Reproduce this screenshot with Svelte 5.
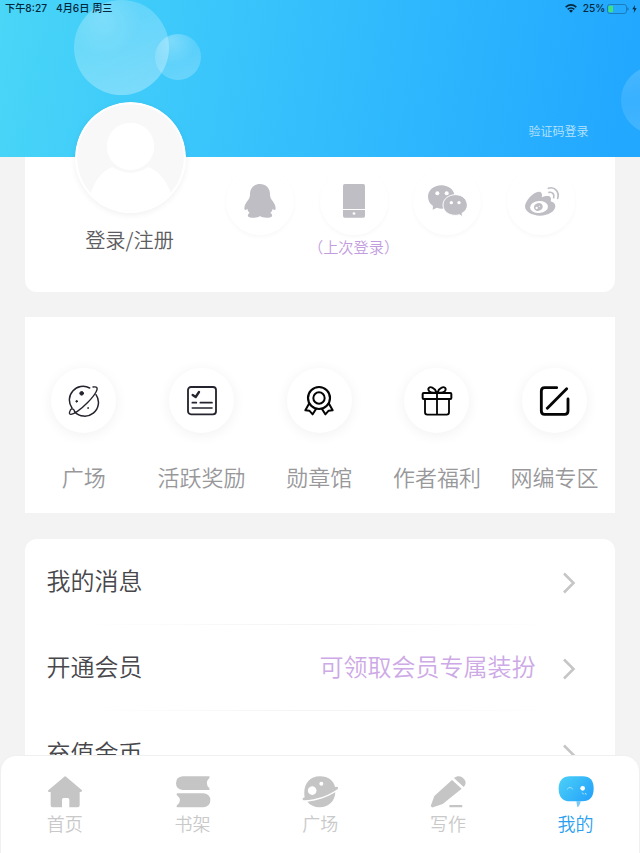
<script>
  /**
   * Profile ("我的") tab of the reading app, signed-out state.
   * Every icon is drawn on a 3x grid: 3 viewBox units per CSS pixel.
   */
  const logins = [
    { id: 'qq', label: 'QQ' },
    { id: 'phone', label: '手机', last: true },
    { id: 'wechat', label: '微信' },
    { id: 'weibo', label: '微博' },
  ];

  const shortcuts = [
    { id: 'planet', label: '广场' },
    { id: 'task', label: '活跃奖励' },
    { id: 'medal', label: '勋章馆' },
    { id: 'gift', label: '作者福利' },
    { id: 'edit', label: '网编专区' },
  ];

  const rows = [
    { label: '我的消息' },
    { label: '开通会员', hint: '可领取会员专属装扮' },
    { label: '充值金币' },
  ];

  const tabs = [
    { id: 'home', label: '首页' },
    { id: 'shelf', label: '书架' },
    { id: 'square', label: '广场' },
    { id: 'write', label: '写作' },
    { id: 'me', label: '我的' },
  ];

  let active = $state('me');
</script>

{#snippet loginIcon(id)}
  <svg class="login-icon" viewBox="0 0 120 108" fill="#bfbec4">
    {#if id === 'qq'}
      <path d="M60 3C43 3 30 15 30 33C30 39 29 43 26 49C19 58 13 67 13 76C13 82 17 83 22 77C23 83 26 87 29 90C22 93 21 103 31 103.500C41 105 55 104 60 99C65 104 79 105 89 103.500C99 103 98 93 91 90C94 87 97 83 98 77C103 83 107 82 107 76C107 67 101 58 94 49C91 43 90 39 90 33C90 15 77 3 60 3Z" />
    {:else if id === 'phone'}
      <path d="M32 3h56q5 0 5 5v70H27V8q0-5 5-5z" />
      <path d="M27 81h66v18q0 5-5 5H32q-5 0-5-5z" />
      <circle cx="60" cy="91.500" r="4" fill="#fff" />
    {:else if id === 'wechat'}
      <path d="M43 7C20 7 3 22 3 41C3 53 9 63 18 69L17 80L30 74Q37 77 43 77C66 77 83 62 83 42C83 22 66 7 43 7Z" />
      <path d="M86 35C65 35 48 48 48 66C48 84 64 97 85 97Q91 97 97 95L107 102L105 91C115 85 121 77 121 67C121 49 106 35 86 35Z" stroke="#fff" stroke-width="3" />
      <g fill="#fff">
        <circle cx="31" cy="31" r="6" /><circle cx="59" cy="31" r="6" />
        <circle cx="73" cy="59" r="5" /><circle cx="96" cy="59" r="5" />
      </g>
    {:else}
      <path d="M12 70C12 54 37 26 54 26C62 26 65 34 62 43C73 38 84 37 88 42C91 46 90 50 89 55C100 59 103 63 103 70C103 85 82 98 57 98C32 98 12 86 12 70Z" />
      <ellipse cx="54" cy="72" rx="27" ry="18" fill="#fff" transform="rotate(-5 54 72)" />
      <ellipse cx="52" cy="72" rx="13.500" ry="11.500" transform="rotate(-20 52 72)" />
      <circle cx="47" cy="75" r="3.500" fill="#fff" /><circle cx="55" cy="70" r="1.800" fill="#fff" />
      <path d="M82 16C101 9 116 27 110 46M84 28C95 26 101 35 98 44" fill="none" stroke="#bfbec4" stroke-width="5" stroke-linecap="round" />
    {/if}
  </svg>
{/snippet}

{#snippet shortcutIcon(id)}
  <svg
    class="shortcut-icon"
    viewBox="0 0 96 96"
    fill="none"
    stroke={id === 'planet' || id === 'task' ? '#24242e' : '#050505'}
    stroke-width="4.500"
    stroke-linecap="round"
    stroke-linejoin="round"
  >
    {#if id === 'planet'}
      <path d="M65 9A41 41 0 0 0 12 69M20 80A41 41 0 0 0 84 29" />
      <path d="M75 6C87 4 91 8 84 21C75 38 47 67 27 80C10 91 0 91 6 78Q7 74 10 72Q17 70 20 80" stroke-width="4" />
      <circle cx="41" cy="25" r="5.500" fill="#24242e" stroke-width="3" />
      <circle cx="26" cy="49" r="2.500" fill="#24242e" stroke-width="3" />
      <circle cx="60" cy="69" r="1.500" fill="#24242e" stroke-width="2" />
    {:else if id === 'task'}
      <rect x="6" y="6" width="84" height="82" rx="9" stroke-width="5.500" />
      <path d="M20 30L29 36L39 21" stroke-width="7" />
      <path d="M19 53H31M43 53H78M19 69H78" stroke-width="5" />
    {:else if id === 'medal'}
      <circle cx="48" cy="39" r="33" stroke-width="6.500" />
      <circle cx="48" cy="39" r="17" stroke-width="6" />
      <path d="M18 56L7 76L19 77L29 88L39 72M78 56L89 76L77 77L67 88L57 72" stroke-width="6" />
    {:else if id === 'gift'}
      <rect x="5" y="24" width="86" height="18" rx="3" stroke-width="6" />
      <path d="M12 43V82Q12 89 19 89H77Q84 89 84 82V43M48 24V88" stroke-width="5.500" />
      <path d="M47 23C39 23 28 24 24 18C18 9 27 4 34 8C41 11 45 17 47 23ZM49 23C57 23 68 24 72 18C78 9 69 4 62 8C55 11 51 17 49 23Z" stroke-width="5.500" />
    {:else}
      <path d="M53 8H17Q7 8 7 18V78Q7 88 17 88H77Q87 88 87 78V42" stroke-width="8.500" />
      <path d="M25 70L83 11" stroke-width="8.500" />
    {/if}
  </svg>
{/snippet}

{#snippet tabIcon(id)}
  <svg class="tab-icon" viewBox="0 0 108 102" fill="#c5c5c5">
    {#if id === 'home'}
      <path d="M51 6Q54 2 58 6L105 46Q107 50 101 51H98V91Q98 97 92 97H67V74Q67 69 62 69H50Q45 69 45 74V97H17Q11 97 11 91V51H7Q0 50 4 46Z" />
    {:else if id === 'shelf'}
      <path d="M23 4H102Q106 5 103 9Q88 24 103 40Q106 44 102 45H23Q3 43 3 25Q3 6 23 4Z" />
      <path d="M7 55H86Q106 58 106 76Q106 94 86 97H7Q2 96 6 91Q24 76 6 61Q2 56 7 55Z" />
    {:else if id === 'square'}
      <path fill-rule="evenodd" d="M8 67C2 33 19 4 54 4C79 4 96 18 99 36L106 35Q110 39 107 42C86 59 43 75 6 76Q0 75 3 69ZM30 34a13 13 0 1 0 1 26a13 13 0 1 0-1-26M58 20a6 6 0 1 0 0 12a6 6 0 1 0 0-12" />
      <path d="M16 80C46 77 74 67 100 52C99 81 76 98 52 97C38 96 25 91 16 80Z" />
    {:else if id === 'write'}
      <path d="M66 15L95 41L38 87L9 97Q2 98 3 91L13 63Z" />
      <path d="M72 9C83 0 96 3 102 12C109 20 108 28 101 36Z" />
      <rect x="58" y="90" width="39" height="7" rx="2" />
    {:else}
      <defs>
        <linearGradient id="me-fill" x1="0" y1="0.200" x2="1" y2="0.800">
          <stop offset="0" stop-color="#49cdf7" />
          <stop offset="1" stop-color="#25a3fb" />
        </linearGradient>
      </defs>
      <path d="M55 79L58 97Q65 94 68 79Z" fill="#7ac9f5" />
      <path d="M36 4H74C96 4 107 17 107 40C107 66 96 79 72 79H36C13 79 2 65 2 41C2 17 14 4 36 4Z" fill="url(#me-fill)" />
      <circle cx="74" cy="40" r="7" fill="#fff" />
      <path d="M28 42Q36 32 44 42" fill="none" stroke="#9be3fb" stroke-width="3" stroke-linecap="round" />
      <path d="M73 53L77 58M81 54L85 59" stroke="#b8ebff" stroke-width="3" />
    {/if}
  </svg>
{/snippet}

<div class="screen">
  <header>
    <div class="bubble bubble--large"></div>
    <div class="bubble bubble--small"></div>
    <div class="bubble bubble--edge"></div>

    <div class="status">
      <span class="time">下午8:27</span>
      <span>4月6日 周三</span>
      <div class="status-right">
        <svg class="wifi" viewBox="0 0 36 27" fill="none" stroke="#06283d" stroke-width="5">
          <path d="M2 9.500Q18-4 34 9.500M8 16Q18 8 28 16" />
          <path d="M12 20Q18 15 24 20L18 26Z" fill="#06283d" stroke="none" />
        </svg>
        <span>25%</span>
        <svg class="battery" viewBox="0 0 66 30">
          <rect x="1.500" y="1.500" width="57" height="27" rx="7" fill="none" stroke="#1973ad" stroke-width="2.500" />
          <path d="M61 10Q65 11 65 15T61 20Z" fill="#1973ad" />
          <path d="M8 5H18V25H8Q4 25 4 21V9Q4 5 8 5Z" fill="#43df7c" />
        </svg>
        <svg class="bolt" viewBox="0 0 15 24" fill="#06283d"><path d="M9 0L1 13H7L5 24L14 10H8Z" /></svg>
      </div>
    </div>
    <a class="code-login" href="#code">验证码登录</a>
  </header>

  <main>
    <section class="card account">
      <div class="user">
        <svg class="avatar" viewBox="0 0 333 333">
          <defs>
            <clipPath id="avatar-clip"><circle cx="166.500" cy="166.500" r="160" /></clipPath>
          </defs>
          <circle cx="166.500" cy="166.500" r="166.500" fill="#fff" />
          <g clip-path="url(#avatar-clip)">
            <rect width="333" height="333" fill="#f8f8f8" />
            <path d="M48 272C62 228 88 204 112 195Q166 230 220 195C248 206 272 230 287 272L260 333H80Z" fill="#fff" />
            <circle cx="166.500" cy="133" r="76" fill="#f8f8f8" />
            <circle cx="166.500" cy="133" r="71" fill="#fff" />
          </g>
        </svg>
        <span class="user-label">登录/注册</span>
      </div>
      <div class="logins">
        {#each logins as login}
          <div class="login">
            <button class="login-btn" aria-label={login.label}>{@render loginIcon(login.id)}</button>
            {#if login.last}<span class="last">（上次登录）</span>{/if}
          </div>
        {/each}
      </div>
    </section>

    <section class="card shortcuts">
      {#each shortcuts as item}
        <div class="shortcut">
          <div class="disc">{@render shortcutIcon(item.id)}</div>
          <span>{item.label}</span>
        </div>
      {/each}
    </section>

    <section class="card list">
      {#each rows as row}
        <div class="row">
          <span class="row-label">{row.label}</span>
          {#if row.hint}<span class="hint">{row.hint}</span>{/if}
          <svg class="chevron" viewBox="0 0 14 22" fill="none" stroke="#c6c6c6" stroke-width="2.600">
            <path d="M2 1.500L11.500 11L2 20.500" />
          </svg>
        </div>
      {/each}
    </section>
  </main>

  <nav>
    {#each tabs as tab}
      <button class="tab" class:active={active === tab.id} onclick={() => (active = tab.id)}>
        {@render tabIcon(tab.id)}
        <span>{tab.label}</span>
      </button>
    {/each}
  </nav>
</div>

<style>
  :global(body) {
    background: #f3f3f3;
  }

  .screen {
    display: grid;
    grid-template-rows: 157px 598px 98px;
    width: 640px;
    height: 853px;
    overflow: hidden;
    background: #f3f3f3;
    font-family: 'Noto Sans CJK SC', sans-serif;
    font-weight: 350;
  }

  button {
    padding: 0;
    border: 0;
    background: none;
    font: inherit;
  }

  svg {
    display: block;
    flex-shrink: 0;
  }

  header {
    position: relative;
    display: flex;
    flex-direction: column;
    justify-content: space-between;
    overflow: hidden;
    background: linear-gradient(100deg, #49d6f7 0%, #36c1fc 43%, #22a8ff 96%);
  }

  .bubble {
    position: absolute;
    border-radius: 50%;
  }

  .bubble--large {
    left: 74px;
    top: 0;
    width: 95px;
    height: 95px;
    background:
      radial-gradient(circle at 30% 18%, rgba(255, 255, 255, 0.16), transparent 38%),
      linear-gradient(160deg, rgba(255, 255, 255, 0.14), rgba(255, 255, 255, 0.34));
  }

  .bubble--small {
    left: 155px;
    top: 34px;
    width: 46px;
    height: 46px;
    background:
      radial-gradient(circle at 36% 14%, rgba(255, 255, 255, 0.25), transparent 50%),
      linear-gradient(160deg, rgba(255, 255, 255, 0.08), rgba(255, 255, 255, 0.25));
  }

  .bubble--edge {
    left: 621px;
    top: 66px;
    width: 68px;
    height: 68px;
    background: linear-gradient(170deg, rgba(255, 255, 255, 0.18), rgba(255, 255, 255, 0.1) 45%, rgba(255, 255, 255, 0.16));
  }

  .status {
    position: relative;
    display: flex;
    align-items: center;
    height: 17px;
    padding: 0 3px 0 5px;
    color: #06283d;
    font: 500 10.200px/17px Inter, 'Noto Sans CJK SC', sans-serif;
  }

  .time {
    margin-right: 9px;
  }

  .status-right {
    display: flex;
    align-items: center;
    margin-left: auto;
  }

  .wifi {
    width: 12px;
    height: 9px;
    margin-right: 6px;
  }

  .battery {
    width: 22px;
    height: 10px;
    margin: 0 3px 0 2px;
  }

  .bolt {
    width: 5px;
    height: 8px;
  }

  .code-login {
    align-self: flex-end;
    margin: 0 52px 17px 0;
    color: #b9e3ff;
    font-size: 12px;
    line-height: 18px;
    text-decoration: none;
  }

  main {
    display: flex;
    flex-direction: column;
    min-height: 0;
    padding: 0 25px;
  }

  .card {
    width: 589.500px;
    flex-shrink: 0;
    box-sizing: border-box;
    background: #fff;
  }

  .account {
    display: flex;
    height: 135px;
    margin-bottom: 25px;
    border-radius: 0 0 12px 12px;
  }

  .user {
    display: flex;
    flex-direction: column;
    align-items: center;
    width: 111px;
    margin: -55px 0 0 50px;
    z-index: 1;
  }

  .avatar {
    width: 111px;
    height: 111px;
    border-radius: 50%;
    box-shadow: 0 2px 6px rgba(0, 0, 0, 0.06);
  }

  .user-label {
    margin-top: 12px;
    margin-left: -2px;
    color: #5c5c61;
    font-size: 20.200px;
    line-height: 30px;
    white-space: nowrap;
  }

  .logins {
    display: grid;
    grid-template-columns: repeat(4, 93.700px);
    margin: 10px 0 0 27px;
  }

  .login {
    display: flex;
    flex-direction: column;
    align-items: center;
  }

  .login-btn {
    display: grid;
    place-items: center;
    width: 68px;
    height: 68px;
    border-radius: 50%;
    box-shadow: 0 2px 4px rgba(0, 0, 0, 0.03);
  }

  .login-icon {
    width: 40px;
    height: 36px;
  }

  .last {
    margin-top: 1px;
    color: #c29ddd;
    font-size: 15.200px;
    font-feature-settings: 'halt';
    line-height: 20px;
    white-space: nowrap;
  }

  .shortcuts {
    display: grid;
    grid-template-columns: repeat(5, 117.700px);
    height: 196px;
    margin-bottom: 26px;
    padding-top: 51px;
  }

  .shortcut {
    display: flex;
    flex-direction: column;
    align-items: center;
    color: #98989b;
    font-size: 22px;
    line-height: 32px;
  }

  .disc {
    display: grid;
    place-items: center;
    width: 65px;
    height: 65px;
    margin-bottom: 27px;
    border-radius: 50%;
    box-shadow: 0 2px 14px rgba(0, 0, 0, 0.06);
  }

  .shortcut-icon {
    width: 32px;
    height: 32px;
  }

  .list {
    height: 216px;
    border-radius: 12px 12px 0 0;
    overflow: hidden;
  }

  .row {
    display: flex;
    align-items: center;
    box-sizing: border-box;
    height: 86px;
    padding: 1px 39px 0 21.500px;
    background: linear-gradient(90deg, transparent 10%, #f3f3f3 50%, transparent 90%) 0 100% / 100% 1px no-repeat;
    font-size: 24px;
    line-height: 36px;
  }

  .row-label,
  .hint {
    padding-bottom: 5px;
  }

  .row-label {
    color: #47474c;
  }

  .hint {
    margin-left: auto;
    color: #cda9e6;
  }

  .chevron {
    width: 14px;
    height: 22px;
    margin-left: auto;
  }

  .hint + .chevron {
    margin-left: 26px;
  }

  nav {
    display: grid;
    grid-template-columns: repeat(5, 127.700px);
    z-index: 1;
    box-sizing: border-box;
    border: 1px solid #f0f0f0;
    border-bottom: 0;
    border-radius: 16px 16px 0 0;
    background: #fff;
  }

  .tab {
    display: flex;
    flex-direction: column;
    align-items: center;
    padding-top: 19px;
    color: #c9c9c9;
    font-size: 18px;
    line-height: 24px;
  }

  .tab-icon {
    width: 36px;
    height: 34px;
    margin-bottom: 2px;
  }

  .active {
    color: #2a9ff0;
  }
</style>
